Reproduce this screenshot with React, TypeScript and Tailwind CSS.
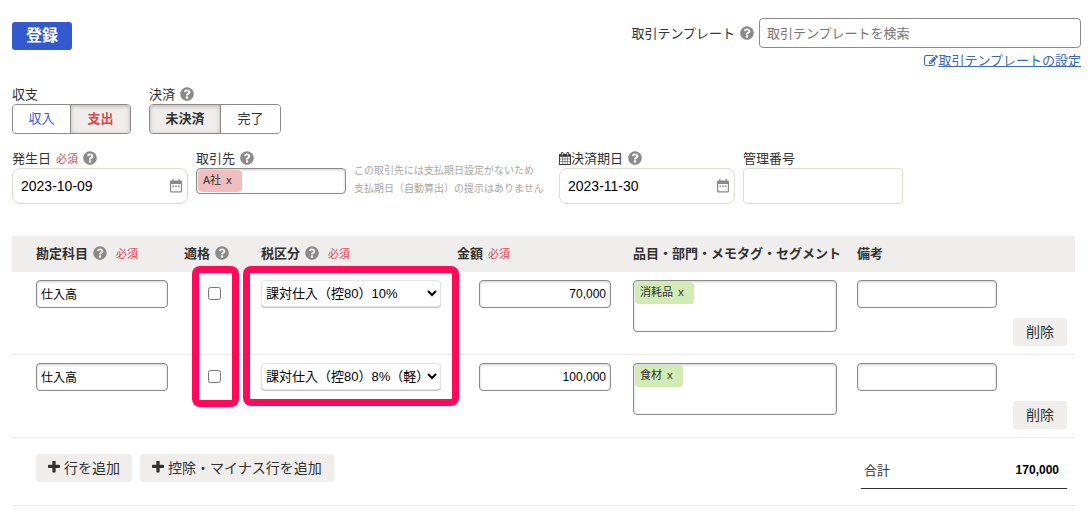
import { useState } from "react";
import type { ReactNode } from "react";
import { FaQuestionCircle } from "react-icons/fa";

const rows = [
  { id: 1, account: "仕入高", tax: "課対仕入（控80）10%", amount: "70,000", tag: "消耗品" },
  { id: 2, account: "仕入高", tax: "課対仕入（控80）8%（軽）", amount: "100,000", tag: "食材" },
];

const taxOptions = ["課対仕入（控80）10%", "課対仕入（控80）8%（軽）"];

const fieldFont = "font-['Liberation_Sans','Noto_Sans_CJK_JP',sans-serif]";
const insetField = "rounded border border-[#8c8989] bg-white shadow-[inset_0_1px_3px_rgba(0,0,0,0.2)]";
const labelRow = "flex items-center gap-[5px] pb-0.5 leading-4";
const grayButton = "h-7 cursor-pointer rounded-[3px] bg-[#f0eeec] pb-0.5 text-sm";

const iconPaths = {
  plus: "M1600 736v192q0 40-28 68t-68 28h-416v416q0 40-28 68t-68 28h-192q-40 0-68-28t-28-68v-416h-416q-40 0-68-28t-28-68v-192q0-40 28-68t68-28h416v-416q0-40 28-68t68-28h192q40 0 68 28t28 68v416h416q40 0 68 28t28 68z",
  edit: "M888 1184l116-116-152-152-116 116v56h96v96h56zm440-720q-16-16-33 1l-350 350q-17 17-1 33t33-1l350-350q17-17 1-33zm80 594v190q0 119-84.5 203.5t-203.5 84.5h-832q-119 0-203.5-84.5t-84.5-203.5v-832q0-119 84.5-203.5t203.5-84.5h832q63 0 117 25 15 7 18 23 3 17-9 29l-49 49q-14 14-32 8-23-6-45-6h-832q-66 0-113 47t-47 113v832q0 66 47 113t113 47h832q66 0 113-47t47-113v-126q0-13 9-22l64-64q15-15 35-7t20 29zm-96-738l288 288-672 672h-288v-288zm444 132l-92 92-288-288 92-92q28-28 68-28t68 28l152 152q28 28 28 68t-28 68z",
  calendar: "M192 1664h288v-288h-288v288zm352 0h320v-288h-320v288zm-352-352h288v-320h-288v320zm352 0h320v-320h-320v320zm-352-384h288v-288h-288v288zm736 736h320v-288h-320v288zm-384-736h320v-288h-320v288zm768 736h288v-288h-288v288zm-384-352h320v-320h-320v320zm-352-864v-288q0-13-9.5-22.5t-22.5-9.5h-64q-13 0-22.5 9.5t-9.5 22.5v288q0 13 9.5 22.5t22.5 9.5h64q13 0 22.5-9.5t9.5-22.5zm736 864h288v-320h-288v320zm-384-384h320v-288h-320v288zm384 0h288v-288h-288v288zm32-480v-288q0-13-9.5-22.5t-22.5-9.5h-64q-13 0-22.5 9.5t-9.5 22.5v288q0 13 9.5 22.5t22.5 9.5h64q13 0 22.5-9.5t9.5-22.5zm384-64v1280q0 52-38 90t-90 38h-1408q-52 0-90-38t-38-90v-1280q0-52 38-90t90-38h128v-96q0-66 47-113t113-47h64q66 0 113 47t47 113v96h384v-96q0-66 47-113t113-47h64q66 0 113 47t47 113v96h128q52 0 90 38t38 90z",
};

function Icon({ name, viewBox, className }: { name: keyof typeof iconPaths; viewBox: string; className: string }) {
  return (
    <svg viewBox={viewBox} className={className} fill="currentColor" aria-hidden="true">
      <path d={iconPaths[name]} />
    </svg>
  );
}

function PlusIcon() {
  return <Icon name="plus" viewBox="192 192 1408 1408" className="h-3 w-3" />;
}

function Help() {
  return (
    <button type="button" aria-label="ヘルプ" className="cursor-pointer text-[#8c8989]">
      <FaQuestionCircle className="h-3.5 w-3.5" />
    </button>
  );
}

function Required() {
  return <span className="text-[11px] font-normal text-[#dc4646]">必須</span>;
}

function PickerIcon() {
  return (
    <svg viewBox="0 0 12 14" className="h-3.5 w-3" fill="#8c8989" aria-hidden="true">
      <path
        fillRule="evenodd"
        d="M1.2 1.5h1V0h1.3v1.5h5V0h1.3v1.5h1A1.2 1.2 0 0 1 12 2.7v9.6a1.2 1.2 0 0 1-1.2 1.2H1.2A1.2 1.2 0 0 1 0 12.3V2.7A1.2 1.2 0 0 1 1.2 1.500zM1.2 5v7.200h9.600V5z"
      />
      <path d="M2.5 6.5h1.600v1.500H2.500z M5.200 6.500h1.600v1.500H5.200z M7.900 6.500h1.600v1.500H7.900z" />
    </svg>
  );
}

function DateField({ id, value }: { id: string; value: string }) {
  return (
    <div className="flex h-9 w-44 items-center rounded-lg border border-[#e1dcd2] bg-white pl-2 pr-[5px]">
      <input id={id} defaultValue={value} className={`min-w-0 flex-1 text-sm text-black outline-none ${fieldFont}`} />
      <button type="button" aria-label="カレンダーを開く" className="cursor-pointer">
        <PickerIcon />
      </button>
    </div>
  );
}

function Tag({ color, children }: { color: string; children: ReactNode }) {
  return (
    <span
      className={`flex h-[22px] shrink-0 items-center gap-[5px] rounded pr-2.5 pb-0.5 pl-[5px] font-['Noto_Sans','Noto_Sans_CJK_JP',sans-serif] text-[11px] ${color}`}
    >
      {children}
      <button type="button" aria-label={`${children}を外す`} className="cursor-pointer">x</button>
    </span>
  );
}

function Segment({ options, value, onChange, label }: {
  options: { text: string; className: string }[];
  value: string;
  onChange: (text: string) => void;
  label: string;
}) {
  return (
    <div role="group" aria-label={label} className="flex h-[30px] w-fit divide-x divide-[#8c8989] overflow-hidden rounded border border-[#8c8989]">
      {options.map((option) => (
        <button
          key={option.text}
          type="button"
          aria-pressed={value === option.text}
          onClick={() => onChange(option.text)}
          className={`cursor-pointer pb-0.5 text-[13px] ${option.className} ${
            value === option.text
              ? "bg-[#f0eeec] font-bold shadow-[inset_0_1px_4px_rgba(0,0,0,0.25)]"
              : "bg-white"
          }`}
        >
          {option.text}
        </button>
      ))}
    </div>
  );
}

export default function App() {
  const [balance, setBalance] = useState("支出");
  const [settlement, setSettlement] = useState("未決済");

  return (
    <main className="bg-white px-3 pt-[18px] font-['Noto_Sans_CJK_JP',sans-serif] text-[13px] leading-[18px] text-[#323232]">
      <header className="-mr-1 flex items-start justify-between">
        <button type="button" className="mt-1 h-7 w-15 cursor-pointer rounded-[3px] bg-[#335bcf] pb-1 text-base leading-6 font-bold text-white">
          登録
        </button>
        <div className="flex flex-col items-end">
          <div className="flex items-center gap-[5px]">
            <label htmlFor="template">取引テンプレート</label>
            <Help />
            <input
              id="template"
              placeholder="取引テンプレートを検索"
              className="h-[30px] w-[322px] rounded border border-[#8c8989] px-[7px] pb-0.5 text-[13px] placeholder:text-[#757575]"
            />
          </div>
          <a href="#template-settings" className="flex items-center leading-6 text-[#3c69b4] underline">
            <Icon name="edit" viewBox="0 128 1792 1408" className="h-[11px] w-3.5" />
            取引テンプレートの設定
          </a>
        </div>
      </header>

      <div className="mt-3.5 flex gap-[18px]">
        <div>
          <div className={labelRow}>収支</div>
          <Segment
            label="収支"
            value={balance}
            onChange={setBalance}
            options={[
              { text: "収入", className: "w-[58px] text-[#335bcf]" },
              { text: "支出", className: "w-[59px] text-[#dc4646]" },
            ]}
          />
        </div>
        <div>
          <div className={labelRow}>
            決済 <Help />
          </div>
          <Segment
            label="決済"
            value={settlement}
            onChange={setSettlement}
            options={[
              { text: "未決済", className: "w-[71px]" },
              { text: "完了", className: "w-[59px]" },
            ]}
          />
        </div>
      </div>

      <div className="mt-4 flex items-start gap-2">
        <div>
          <div className={labelRow}>
            <label htmlFor="issue-date">発生日</label>
            <Required />
            <Help />
          </div>
          <DateField id="issue-date" value="2023-10-09" />
        </div>
        <div>
          <div className={labelRow}>
            <label htmlFor="partner">取引先</label>
            <Help />
          </div>
          <div className={`flex h-[26px] w-[150px] items-center px-px ${insetField}`}>
            <Tag color="bg-[#f0bebe]">A社</Tag>
            <input id="partner" className="min-w-0 flex-1 bg-transparent outline-none" />
          </div>
        </div>
        <p className="w-[197px] pt-[11px] text-[10px] leading-[18px] whitespace-nowrap text-[#aaa7a4]">
          この取引先には支払期日設定がないため
          <br />
          支払期日（自動算出）の提示はありません
        </p>
        <div>
          <div className={labelRow}>
            <label htmlFor="due-date" className="flex items-center">
              <Icon name="calendar" viewBox="64 0 1664 1792" className="h-[13px] w-3" />
              決済期日
            </label>
            <Help />
          </div>
          <DateField id="due-date" value="2023-11-30" />
        </div>
        <div>
          <label htmlFor="control-number" className={labelRow}>管理番号</label>
          <input id="control-number" className="block h-9 w-40 rounded border border-[#e1dcd2] px-2" />
        </div>
      </div>

      <section className="relative mt-8 mr-0.5">
        <table className="w-full table-fixed border-separate border-spacing-0">
          <colgroup>
            <col className="w-[164px]" />
            <col className="w-[77px]" />
            <col className="w-[196px]" />
            <col className="w-44" />
            <col className="w-56" />
            <col className="w-39" />
            <col />
          </colgroup>
          <thead className="bg-[#f0eeec]">
            <tr className="h-9 text-left whitespace-nowrap">
              <th className="pl-6">
                <span className={labelRow}>勘定科目 <Help /> <span className="ml-1 flex"><Required /></span></span>
              </th>
              <th className="pl-2">
                <span className={labelRow}>適格 <Help /></span>
              </th>
              <th className="pl-2">
                <span className={labelRow}>税区分 <Help /> <span className="ml-1 flex"><Required /></span></span>
              </th>
              <th className="pl-2">
                <span className={labelRow}>金額 <Required /></span>
              </th>
              <th className="pl-2">
                <span className={labelRow}>品目・部門・メモタグ・セグメント</span>
              </th>
              <th className="pl-2">
                <span className={labelRow}>備考</span>
              </th>
              <td />
            </tr>
          </thead>
          <tbody>
            {rows.map((row) => (
              <tr key={row.id} className="h-[83px] align-top [&>td]:border-b [&>td]:border-[#ebebeb]">
                <td className="pt-2 pl-6">
                  <input
                    aria-label="勘定科目"
                    defaultValue={row.account}
                    className={`block h-7 w-33 px-1 pb-0.5 text-xs text-black ${insetField}`}
                  />
                </td>
                <td className="pt-[15px] pl-8">
                  <input type="checkbox" aria-label="適格" className="block h-[13px] w-[13px]" />
                </td>
                <td className="pt-2 pl-2">
                  <select
                    aria-label="税区分"
                    defaultValue={row.tax}
                    className={`block h-[27px] w-45 rounded border border-[#e4e4e4] bg-white text-[13px] text-black shadow-[0_1px_1px_rgba(0,0,0,0.25)] ${fieldFont}`}
                  >
                    {taxOptions.map((option) => (
                      <option key={option}>{option}</option>
                    ))}
                  </select>
                </td>
                <td className="pt-2 pr-3.5">
                  <input
                    aria-label="金額"
                    defaultValue={row.amount}
                    className={`ml-auto block h-7 w-33 px-1 text-right text-xs text-black ${fieldFont} ${insetField}`}
                  />
                </td>
                <td className="pt-2 pl-2">
                  <div className={`flex h-13 w-51 items-start p-px ${insetField}`}>
                    <Tag color="bg-[#d2ebb4]">{row.tag}</Tag>
                    <input aria-label="品目・部門・メモタグ・セグメント" className="min-w-0 flex-1 bg-transparent outline-none" />
                  </div>
                </td>
                <td className="pt-2 pl-2">
                  <input aria-label="備考" className={`block h-7 w-35 px-1 text-xs ${insetField}`} />
                </td>
                <td className="pr-2 pb-2 align-bottom">
                  <button type="button" className={`ml-auto block w-[54px] ${grayButton}`}>
                    削除
                  </button>
                </td>
              </tr>
            ))}
          </tbody>
        </table>

        <div className="flex items-start gap-2 border-b border-[#ebebeb] pt-4 pr-2 pb-4 pl-6">
          <button type="button" className={`flex items-center gap-1 px-3 ${grayButton}`}>
            <PlusIcon />
            行を追加
          </button>
          <button type="button" className={`flex items-center gap-1 px-3 ${grayButton}`}>
            <PlusIcon />
            控除・マイナス行を追加
          </button>
          <div className="ml-auto flex h-[35px] w-[206px] items-center justify-between border-b border-[#323232] pr-2 pb-0.5 pl-[3px]">
            <span>合計</span>
            <strong className={`text-xs text-black ${fieldFont}`}>170,000</strong>
          </div>
        </div>

        {/* highlight frames */}
        <div className="pointer-events-none absolute top-[30px] left-[180px] h-[141px] w-[47px] rounded-lg border-[7px] border-[#ff0a5a]" />
        <div className="pointer-events-none absolute top-[30px] left-[231px] h-[140px] w-[216px] rounded-lg border-[7px] border-[#ff0a5a]" />
      </section>
    </main>
  );
}
